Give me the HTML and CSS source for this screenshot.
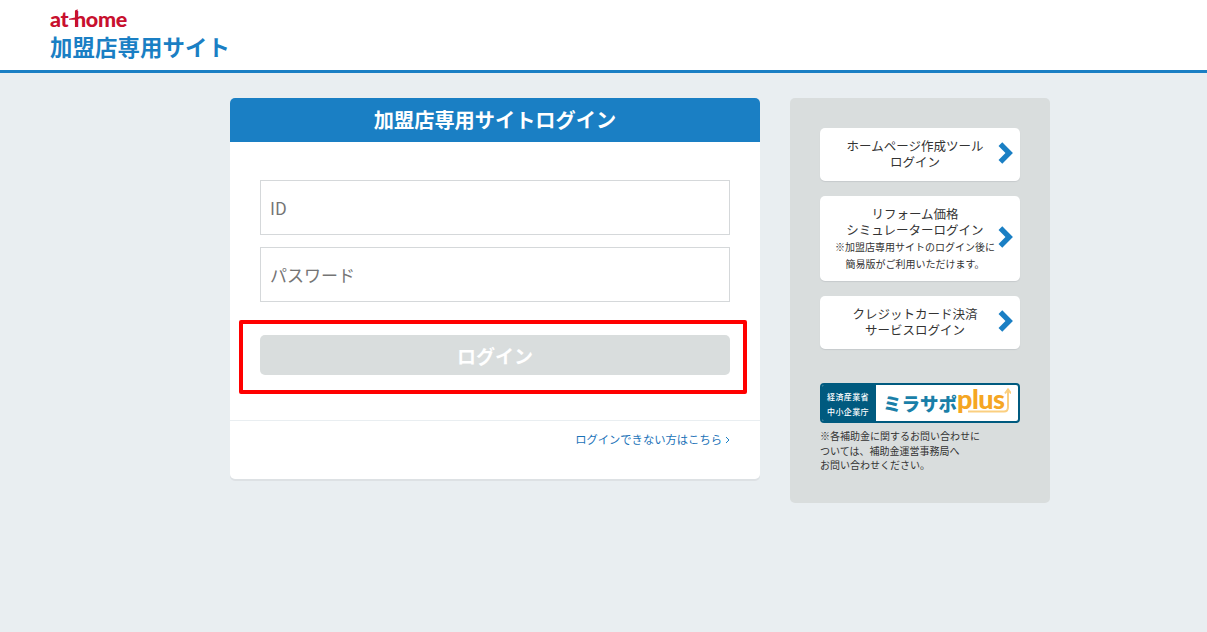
FILE: index.html
```html
<!DOCTYPE html>
<html lang="ja">
<head>
<meta charset="utf-8">
<title>加盟店専用サイトログイン</title>
<link rel="stylesheet" href="styles.css">
</head>
<body>
<header class="site-header">
  <div class="logo"><span>at</span><svg class="logo-swoosh" width="11" height="19" viewBox="0 0 11 19"><path d="M0 9.8 L6 8.4 V1.5 L8.6 0.3 V18 H6 V10.8 L0 10.8 Z" fill="#c8102e"/></svg><span>home</span></div>
  <div class="site-title">加盟店専用サイト</div>
</header>
<main class="content">
  <section class="login-card">
    <h1 class="login-title">加盟店専用サイトログイン</h1>
    <form class="login-form">
      <input class="field" type="text" placeholder="ID">
      <input class="field" type="password" placeholder="パスワード">
      <div class="highlight">
        <button class="login-button" type="button">ログイン</button>
      </div>
    </form>
    <div class="login-foot">
      <a class="help-link" href="#">ログインできない方はこちら<svg class="help-chevron" width="5" height="8" viewBox="0 0 5 8"><path d="M1 1 L4 4 L1 7" fill="none" stroke="#1a7fc4" stroke-width="1"/></svg></a>
    </div>
  </section>
  <aside class="side-panel">
    <a class="side-link link-short" href="#">
      <span class="side-text">ホームページ作成ツール<br>ログイン</span>
      <svg class="chevron" width="16" height="22" viewBox="0 0 15 20"><path d="M0.5 3.5 L4 0 L14 10 L4 20 L0.5 16.5 L7 10 Z" fill="#1a7fc4"/></svg>
    </a>
    <a class="side-link link-tall" href="#">
      <span class="side-text">リフォーム価格<br>シミュレーターログイン<small class="side-note">※加盟店専用サイトのログイン後に<br>簡易版がご利用いただけます。</small></span>
      <svg class="chevron" width="16" height="22" viewBox="0 0 15 20"><path d="M0.5 3.5 L4 0 L14 10 L4 20 L0.5 16.5 L7 10 Z" fill="#1a7fc4"/></svg>
    </a>
    <a class="side-link link-short" href="#">
      <span class="side-text">クレジットカード決済<br>サービスログイン</span>
      <svg class="chevron" width="16" height="22" viewBox="0 0 15 20"><path d="M0.5 3.5 L4 0 L14 10 L4 20 L0.5 16.5 L7 10 Z" fill="#1a7fc4"/></svg>
    </a>
    <div class="banner">
      <div class="banner-agency">経済産業省<br>中小企業庁</div>
      <div class="banner-brand">
        <span class="brand-kana">ミラサポ</span><span class="brand-plus">plus</span><svg class="brand-arrow" width="44" height="28" viewBox="0 0 44 28"><path d="M1 24.5 H37 Q41 24.5 41 20 V3 M38 6.5 L41 2.5 L44 6.5" fill="none" stroke="#fbcf80" stroke-width="2"/></svg>
      </div>
    </div>
    <p class="banner-note">※各補助金に関するお問い合わせに<br>ついては、補助金運営事務局へ<br>お問い合わせください。</p>
  </aside>
</main>
</body>
</html>
```

FILE: styles.css
```css
* { box-sizing: border-box; }
html, body { margin: 0; padding: 0; }
body {
  min-height: 632px;
  background: #e9eef1;
  color: #333;
  font-family: "Noto Sans CJK JP", "Noto Sans", sans-serif;
}
a { text-decoration: none; }

.site-header {
  height: 73px;
  background: #fff;
  border-bottom: 3px solid #1a7fc4;
  padding: 8px 0 0 50px;
}
.logo {
  display: flex;
  align-items: center;
  height: 21px;
  color: #c8102e;
  font-family: "Lato", sans-serif;
  font-weight: 900;
  font-size: 21.5px;
  line-height: 20px;
  letter-spacing: -0.3px;
}
.logo-swoosh { margin: 0 -6.5px 0 1px; flex: none; }
.site-title {
  color: #1a7fc4;
  font-size: 22.4px;
  font-weight: 700;
  line-height: 34px;
  letter-spacing: 0.1px;
}

.content {
  display: flex;
  align-items: flex-start;
  gap: 30px;
  padding: 25px 0 0 230px;
}

.login-card {
  width: 530px;
  height: 381px;
  background: #fff;
  border-radius: 5px;
  box-shadow: 0 2px 0 #dde1e4;
}
.login-title {
  margin: 0;
  height: 44px;
  background: #1a7fc4;
  border-radius: 5px 5px 0 0;
  color: #fff;
  font-size: 20.2px;
  font-weight: 700;
  line-height: 44px;
  text-align: center;
}
.login-form {
  padding: 38px 30px 0;
  height: 278px;
  display: flex;
  flex-direction: column;
  gap: 12px;
}
.field {
  display: block;
  width: 100%;
  height: 55px;
  flex: none;
  padding: 0 9px;
  border: 1px solid #d5d8da;
  border-radius: 0;
  background: #fff;
  font-family: inherit;
  font-size: 17px;
  color: #333;
}
.field::placeholder { color: #757575; opacity: 1; }
.highlight {
  margin: 6px -17px 0 -21px;
  padding: 11px 13px 15px 17px;
  border: 4px solid #f00;
  border-radius: 2px;
}
.login-button {
  display: block;
  width: 100%;
  height: 40px;
  padding: 2px 0 0;
  border: 0;
  border-radius: 5px;
  background: #d9dddd;
  color: #fff;
  font-family: inherit;
  font-size: 19px;
  font-weight: 700;
  line-height: 38px;
}
.login-foot {
  height: 59px;
  border-top: 1px solid #e9eef1;
  padding: 4px 30px 0 0;
  text-align: right;
}
.help-link {
  color: #1a72b8;
  font-size: 11.3px;
  line-height: 20px;
}
.help-chevron { margin-left: 3px; }

.side-panel {
  width: 260px;
  height: 405px;
  padding: 30px;
  background: #d9dddd;
  border-radius: 5px;
}
.side-link {
  display: flex;
  align-items: center;
  background: #fff;
  border-radius: 5px;
  box-shadow: 0 1px 1px #c6cacc;
  color: #333;
  padding-right: 6px;
  margin-bottom: 15px;
}
.link-short { height: 53px; }
.link-tall { height: 85px; }
.link-short .side-text { padding-bottom: 2px; }
.side-text {
  flex: 1;
  min-width: 0;
  padding-left: 13px;
  text-align: center;
  font-size: 12.5px;
  line-height: 16px;
}
.side-note {
  display: block;
  margin: 0 -3px 0 -3px;
  font-size: 10px;
  line-height: 17px;
}
.chevron { flex: none; margin: -3px 0 0 1px; }

.banner {
  display: flex;
  width: 200px;
  height: 40px;
  margin-top: 34px;
  border: 2px solid #005a7f;
  border-radius: 4px;
  background: #fff;
  overflow: hidden;
}
.banner-agency {
  width: 54px;
  flex: none;
  background: #005a7f;
  color: #fff;
  font-size: 8px;
  font-weight: 500;
  line-height: 15px;
  padding: 4px 0 0 5px;
  letter-spacing: 0.4px;
}
.banner-brand {
  display: flex;
  align-items: center;
  flex: 1;
  padding-left: 7px;
  white-space: nowrap;
}
.brand-kana {
  color: #1a7fa8;
  font-size: 18.5px;
  font-weight: 900;
  line-height: 36px;
}
.brand-plus {
  color: #f5a623;
  font-family: "Lato", sans-serif;
  font-size: 27px;
  font-weight: 900;
  line-height: 30px;
  letter-spacing: -0.5px;
  margin-top: -9px;
}
.brand-arrow { flex: none; margin: -4px 0 0 -38px; }
.banner-note {
  margin: 6px 0 0;
  font-size: 10px;
  line-height: 14.7px;
  color: #333;
}
```
